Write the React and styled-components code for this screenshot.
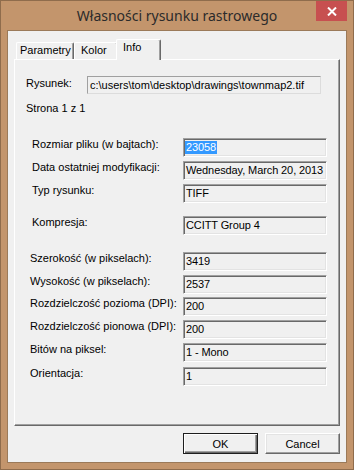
import React from "react";
import styled, { createGlobalStyle } from "styled-components";

const GlobalStyle = createGlobalStyle`
  html, body { margin: 0; padding: 0; background: #ffffff; }
  body { font-family: "Liberation Sans", Arial, sans-serif; font-size: 11px; color: #000; }
`;

const Window = styled.div`
  box-sizing: border-box;
  width: 354px;
  height: 470px;
  background: #c3956c;
  border: 1px solid #8f6c4c;
  padding: 0 6px 6px;
  display: flex;
  flex-direction: column;
`;

const TitleBar = styled.div`
  height: 29px;
  display: grid;
  grid-template-columns: 1fr auto 1fr;
  align-items: start;
`;

const Title = styled.div`
  grid-column: 2;
  font-family: "Noto Sans", "Open Sans", sans-serif;
  font-size: 14px;
  line-height: 29px;
  color: #2b2b2b;
  white-space: nowrap;
`;

const CloseButton = styled.div`
  grid-column: 3;
  justify-self: end;
  width: 31px;
  height: 20px;
  background: #c75050;
  display: flex;
  align-items: center;
  justify-content: center;
`;

const Client = styled.div`
  box-sizing: border-box;
  height: 433px;
  border: 1px solid #9b7a59;
  background: #f0f0f0;
  padding: 8px 6px 8px;
  display: flex;
  flex-direction: column;
`;

const TabRow = styled.div`
  display: flex;
  align-items: flex-end;
  height: 20px;
  padding-left: 2px;
`;

const Tab = styled.div`
  box-sizing: border-box;
  width: ${(p) => p.$w}px;
  height: ${(p) => (p.$active ? 21 : 17)}px;
  margin: ${(p) => (p.$active ? "0 -2px -1px -2px" : "0")};
  position: relative;
  z-index: ${(p) => (p.$active ? 2 : 1)};
  background: #f0f0f0;
  border-top: 1px solid #ffffff;
  border-left: 1px solid #ffffff;
  border-right: 1px solid #696969;
  box-shadow: inset -1px 0 #a0a0a0;
  border-radius: 2px 2px 0 0;
  padding-left: ${(p) => p.$pl}px;
  line-height: 15px;
  white-space: nowrap;
`;

const Pane = styled.div`
  box-sizing: border-box;
  height: 367px;
  background: #f0f0f0;
  border: 1px solid;
  border-color: #ffffff #696969 #696969 #ffffff;
  box-shadow: inset -1px -1px #a0a0a0;
  display: flex;
  flex-direction: column;
`;

const Row = styled.div`
  display: flex;
  align-items: flex-start;
  margin-top: ${(p) => p.$mt}px;
`;

const Label = styled.div`
  box-sizing: border-box;
  width: ${(p) => p.$w}px;
  padding-left: ${(p) => p.$indent}px;
  padding-top: ${(p) => p.$pt || 0}px;
  line-height: 13px;
  white-space: nowrap;
`;

const Text = styled.div`
  margin-top: ${(p) => p.$mt}px;
  padding-left: ${(p) => p.$indent}px;
  line-height: 13px;
`;

const FlatField = styled.div`
  box-sizing: border-box;
  width: 234px;
  height: 18px;
  border: 1px solid;
  border-color: #a0a0a0 #dcdcdc #dcdcdc #a0a0a0;
  padding-left: 2px;
  display: flex;
  align-items: center;
  line-height: 13px;
  white-space: nowrap;
  overflow: hidden;
`;

const SunkenField = styled.div`
  box-sizing: border-box;
  width: 144px;
  height: 19px;
  border: 1px solid;
  border-color: #a0a0a0 #ffffff #ffffff #a0a0a0;
  box-shadow: inset 1px 1px #696969, inset -1px -1px #e3e3e3;
  padding-left: 1px;
  display: flex;
  align-items: center;
  white-space: nowrap;
  overflow: hidden;
`;

const Value = styled.span`
  padding: 0 1px;
  line-height: 13px;
  letter-spacing: -0.1px;
  background: ${(p) => (p.$selected ? "#3399ff" : "transparent")};
  color: ${(p) => (p.$selected ? "#ffffff" : "#000000")};
`;

const ButtonRow = styled.div`
  display: flex;
  justify-content: flex-end;
  gap: 7px;
  margin-top: 7px;
`;

const Button = styled.button`
  box-sizing: border-box;
  width: 75px;
  height: 21px;
  padding: 0;
  font-family: "Liberation Sans", Arial, sans-serif;
  font-size: 11px;
  color: #000;
  background: #f0f0f0;
  border: 1px solid;
  border-color: ${(p) =>
    p.$default ? "#1e1e1e" : "#ffffff #696969 #696969 #ffffff"};
  box-shadow: ${(p) =>
    p.$default
      ? "inset 1px 1px #ffffff, inset -1px -1px #696969, inset -2px -2px #a0a0a0"
      : "inset -1px -1px #a0a0a0, inset 1px 1px #e3e3e3"};
`;

const fields2 = [
  { label: "Rozmiar pliku (w bajtach):", value: "23058", mt: 23, selected: true },
  { label: "Data ostatniej modyfikacji:", value: "Wednesday, March 20, 2013", mt: 4 },
  { label: "Typ rysunku:", value: "TIFF", mt: 4 },
  { label: "Kompresja:", value: "CCITT Group 4", mt: 13 },
];

const fields3 = [
  { label: "Szerokość (w pikselach):", value: "3419", mt: 17 },
  { label: "Wysokość (w pikselach):", value: "2537", mt: 4 },
  { label: "Rozdzielczość pozioma (DPI):", value: "200", mt: 3 },
  { label: "Rozdzielczość pionowa (DPI):", value: "200", mt: 4 },
  { label: "Bitów na piksel:", value: "1 - Mono", mt: 4 },
  { label: "Orientacja:", value: "1", mt: 5 },
];

export default function App() {
  return (
    <>
      <GlobalStyle />
      <Window>
        <TitleBar>
          <Title>Własności rysunku rastrowego</Title>
          <CloseButton>
            <svg width="10" height="9" viewBox="0 0 10 9">
              <path d="M1 0.5 L9 8.5 M9 0.5 L1 8.5" stroke="#ffffff" strokeWidth="2" />
            </svg>
          </CloseButton>
        </TitleBar>
        <Client>
          <TabRow>
            <Tab $w={58} $pl={3}>Parametry</Tab>
            <Tab $w={44} $pl={6}>Kolor</Tab>
            <Tab $w={45} $pl={6} $active>Info</Tab>
          </TabRow>
          <Pane>
            <Row $mt={16}>
              <Label $w={72} $indent={11} $pt={1}>Rysunek:</Label>
              <FlatField>c:\users\tom\desktop\drawings\townmap2.tif</FlatField>
            </Row>
            <Text $mt={8} $indent={11}>Strona 1 z 1</Text>
            {fields2.map((f) => (
              <Row key={f.label} $mt={f.mt}>
                <Label $w={168} $indent={17}>{f.label}</Label>
                <SunkenField>
                  <Value $selected={f.selected}>{f.value}</Value>
                </SunkenField>
              </Row>
            ))}
            {fields3.map((f, i) => (
              <Row key={f.label + i} $mt={f.mt}>
                <Label $w={168} $indent={15}>{f.label}</Label>
                <SunkenField>
                  <Value>{f.value}</Value>
                </SunkenField>
              </Row>
            ))}
          </Pane>
          <ButtonRow>
            <Button $default>OK</Button>
            <Button>Cancel</Button>
          </ButtonRow>
        </Client>
      </Window>
    </>
  );
}
